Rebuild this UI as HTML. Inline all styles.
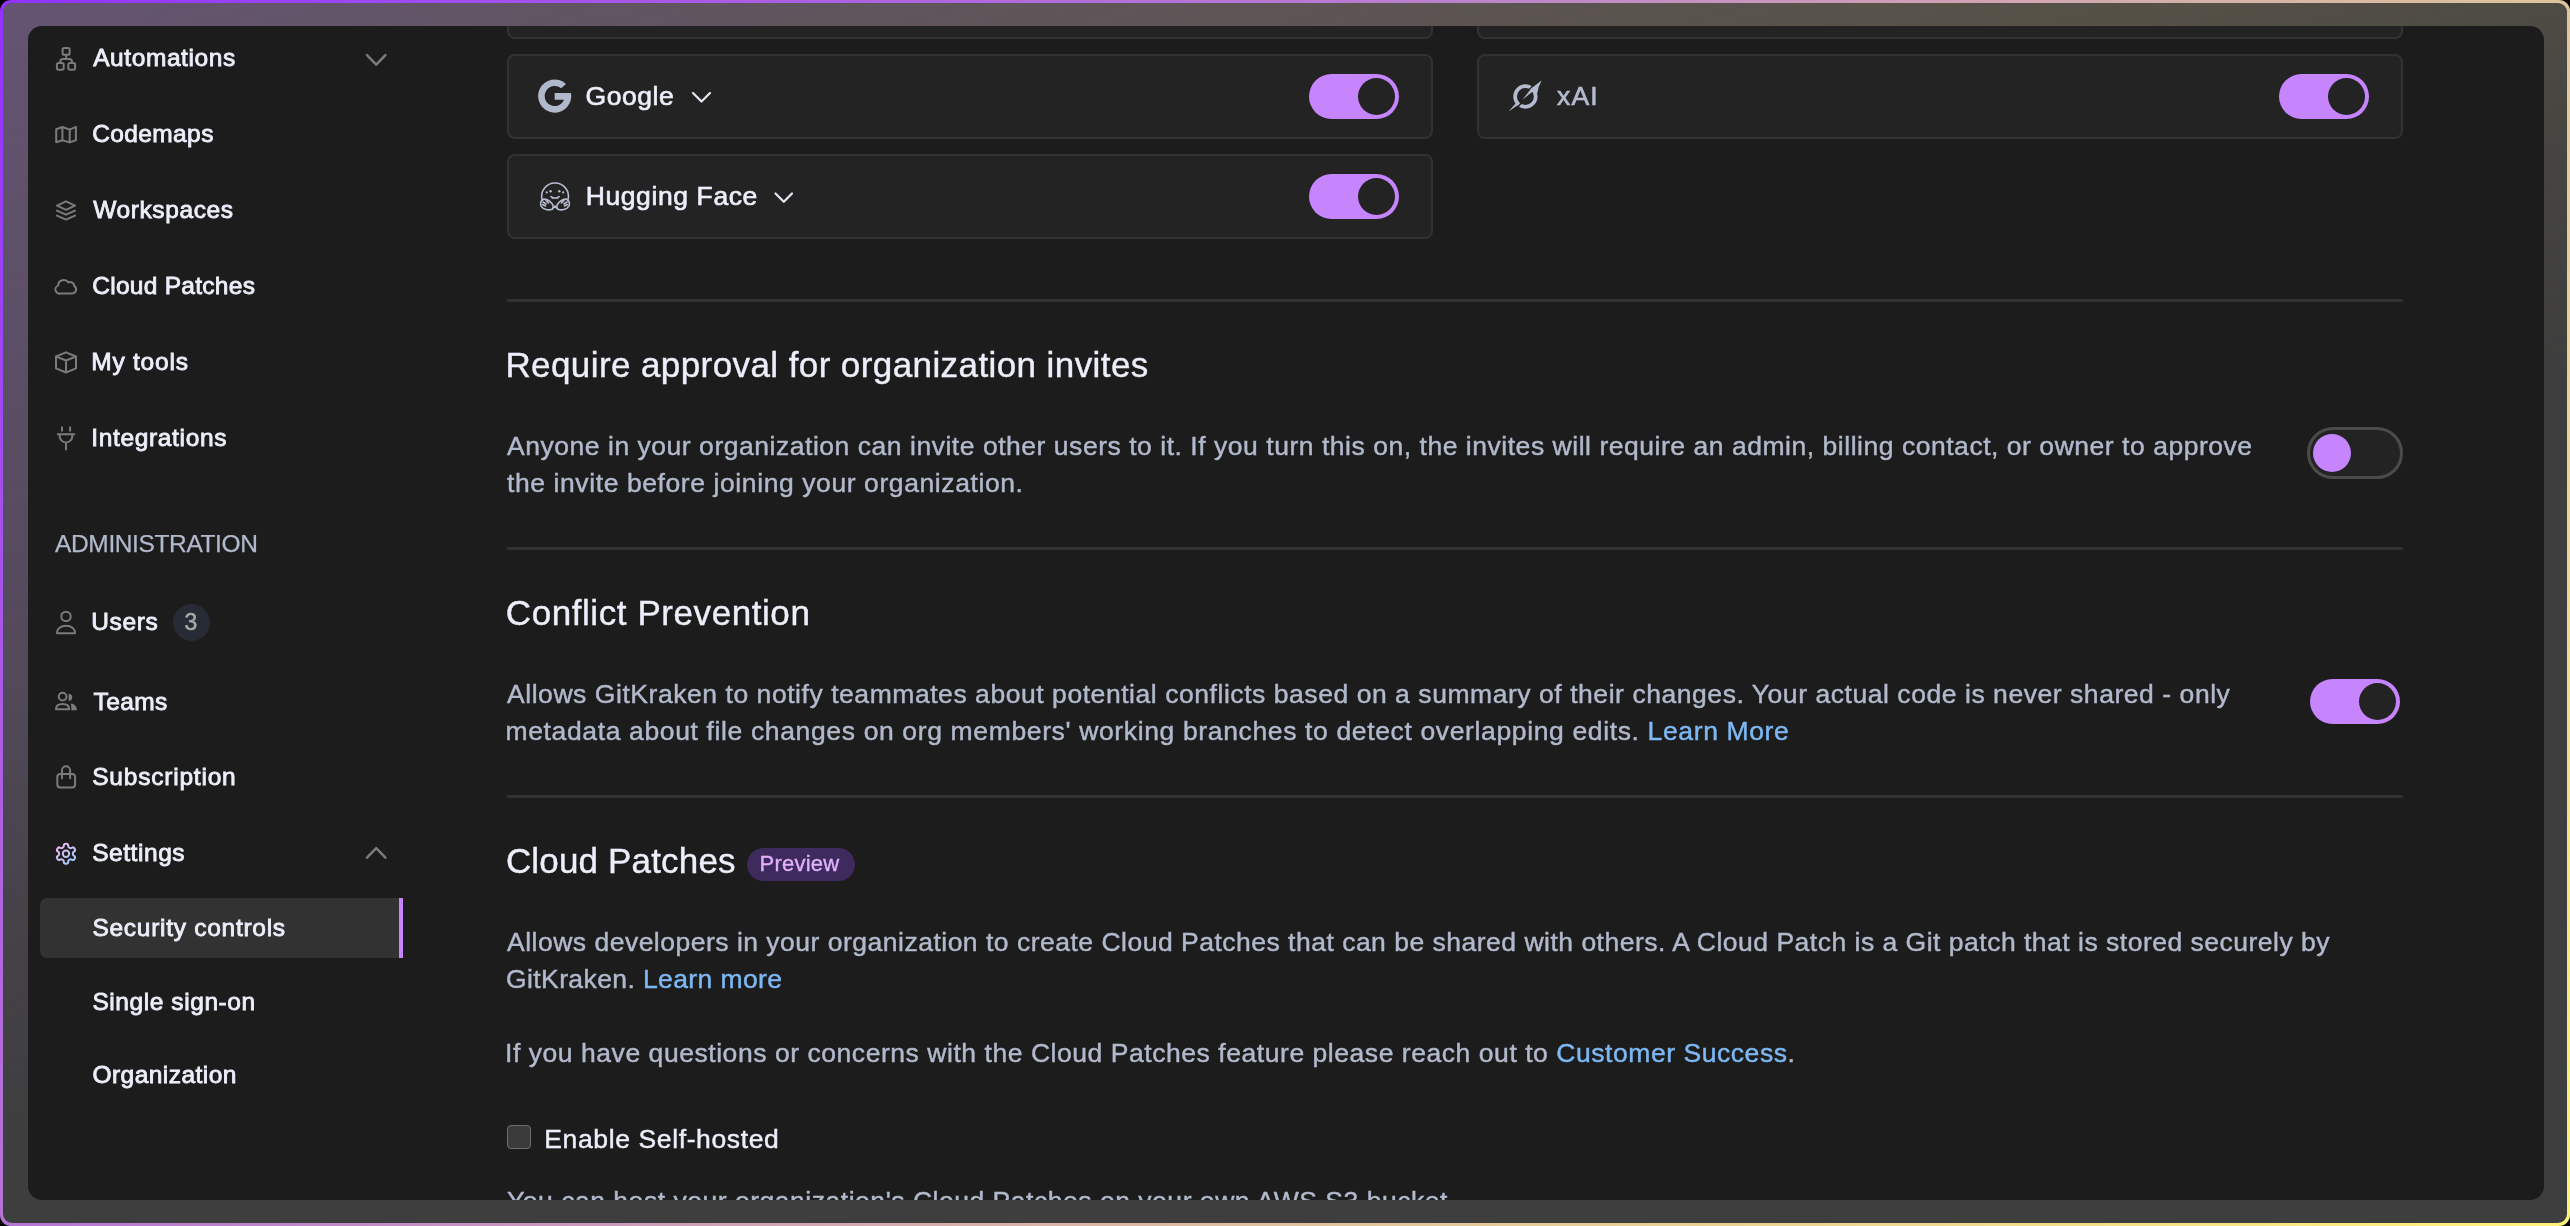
<!DOCTYPE html>
<html><head><meta charset="utf-8"><style>
*{margin:0;padding:0;box-sizing:border-box}
html,body{width:2570px;height:1226px;overflow:hidden;background:#000}
body{position:relative;font-family:"Liberation Sans",sans-serif}
.frame{position:absolute;left:0;top:0;width:2570px;height:1226px;border-radius:11px;
 background:linear-gradient(135deg,#9232ff 0%,#a85ae6 18%,#b97cd0 36%,#d0a3b4 52%,#e1c59a 68%,#efd98c 84%,#fff27a 100%)}
.inner{position:absolute;left:3px;top:3px;right:3px;bottom:3px;border-radius:9px;background:#3e3e3e;overflow:hidden}
.tint{position:absolute;left:0;top:0;right:0;bottom:0;
 background:linear-gradient(90deg,#655473 0%,#665a64 30%,#695e5e 50%,#68604f 80%,#68614d 100%);
 -webkit-mask-image:linear-gradient(163deg,rgba(0,0,0,1) 0%,rgba(0,0,0,0.55) 33%,rgba(0,0,0,0.2) 46%,rgba(0,0,0,0) 58%)}
.panel{position:absolute;left:28px;top:26px;width:2516px;height:1174px;border-radius:14px;background:#1c1c1c;overflow:hidden}
.abs{position:absolute}
.t{position:absolute;white-space:nowrap;font-family:"Liberation Sans",sans-serif}
.card{position:absolute;background:#232323;border:2px solid #323232;border-radius:8px}
.sep{position:absolute;left:507px;width:1896px;height:3px;background:#313131}
.tog{position:absolute;width:90px;height:45px;border-radius:23px;background:#c684fd}
.tog::after{content:"";position:absolute;right:4px;top:4px;width:37px;height:37px;border-radius:50%;background:#232323}
.hl{position:absolute;left:40px;top:898px;width:363px;height:60px;background:#323232;border-radius:7px 0 0 7px}
.hlbar{position:absolute;left:399px;top:898px;width:4px;height:60px;background:#c684fd}
.badge3{position:absolute;left:172.5px;top:604.3px;width:37px;height:37px;border-radius:50%;background:#272b35}
.badge3 span{position:absolute;left:0;right:0;top:7px;text-align:center;font-size:23px;line-height:23px;color:#a9a9a9;-webkit-text-stroke:0.5px #a9a9a9;font-family:"Liberation Sans",sans-serif}
.pill{position:absolute;left:746.5px;top:847.5px;width:108.5px;height:33.5px;border-radius:17px;background:#3e2a5c}
.ic{position:absolute;left:0;top:0}
.off{position:absolute;left:2307px;top:427px;width:96px;height:52px;border-radius:26px;border:3.3px solid #4b4b4b;background:#232323}
.off::after{content:"";position:absolute;left:3.3px;top:4.4px;width:38px;height:38px;border-radius:50%;background:#c684fd}
.cb{position:absolute;left:507px;top:1124.5px;width:24px;height:24px;border-radius:4px;border:1.6px solid #6e6e6e;background:#3b3b3b}
</style></head><body>
<div class="frame"><div class="inner"><div class="tint"></div></div></div>
<div class="panel"><div style="position:absolute;left:-28px;top:-26px;width:2570px;height:1226px;will-change:transform">
<div class="card" style="left:507px;top:-47px;width:925.5px;height:86px"></div>
<div class="card" style="left:1477px;top:-47px;width:926px;height:86px"></div>
<div class="card" style="left:507px;top:53.5px;width:925.5px;height:85.5px"></div>
<div class="card" style="left:1477px;top:53.5px;width:926px;height:85.5px"></div>
<div class="card" style="left:507px;top:153.5px;width:925.5px;height:85.5px"></div>
<div class="tog" style="left:1308.5px;top:73.8px"></div>
<div class="tog" style="left:2278.7px;top:74px"></div>
<div class="tog" style="left:1308.5px;top:173.8px"></div>
<div class="tog" style="left:2310px;top:679px"></div>
<div class="off"></div>
<div class="sep" style="top:298.5px"></div>
<div class="sep" style="top:546.5px"></div>
<div class="sep" style="top:794.5px"></div>
<div class="cb"></div>
<div class="hl"></div><div class="hlbar"></div>
<div class="t" style="left:93.20px;top:45.86px;font-size:24.5px;line-height:24.5px;color:#eceffa;font-weight:400;letter-spacing:0.580px;-webkit-text-stroke:0.85px #eceffa;">Automations</div>
<div class="t" style="left:92.20px;top:121.66px;font-size:24.5px;line-height:24.5px;color:#eceffa;font-weight:400;letter-spacing:0.388px;-webkit-text-stroke:0.85px #eceffa;">Codemaps</div>
<div class="t" style="left:93.20px;top:197.96px;font-size:24.5px;line-height:24.5px;color:#eceffa;font-weight:400;letter-spacing:0.611px;-webkit-text-stroke:0.85px #eceffa;">Workspaces</div>
<div class="t" style="left:92.20px;top:274.06px;font-size:24.5px;line-height:24.5px;color:#eceffa;font-weight:400;letter-spacing:0.284px;-webkit-text-stroke:0.85px #eceffa;">Cloud Patches</div>
<div class="t" style="left:91.20px;top:350.16px;font-size:24.5px;line-height:24.5px;color:#eceffa;font-weight:400;letter-spacing:0.786px;-webkit-text-stroke:0.85px #eceffa;">My tools</div>
<div class="t" style="left:91.20px;top:426.06px;font-size:24.5px;line-height:24.5px;color:#eceffa;font-weight:400;letter-spacing:0.666px;-webkit-text-stroke:0.85px #eceffa;">Integrations</div>
<div class="t" style="left:91.20px;top:610.06px;font-size:24.5px;line-height:24.5px;color:#eceffa;font-weight:400;letter-spacing:0.650px;-webkit-text-stroke:0.85px #eceffa;">Users</div>
<div class="t" style="left:93.60px;top:689.56px;font-size:24.5px;line-height:24.5px;color:#eceffa;font-weight:400;letter-spacing:0.350px;-webkit-text-stroke:0.85px #eceffa;">Teams</div>
<div class="t" style="left:92.20px;top:765.26px;font-size:24.5px;line-height:24.5px;color:#eceffa;font-weight:400;letter-spacing:0.792px;-webkit-text-stroke:0.85px #eceffa;">Subscription</div>
<div class="t" style="left:92.20px;top:840.66px;font-size:24.5px;line-height:24.5px;color:#eceffa;font-weight:400;letter-spacing:0.554px;-webkit-text-stroke:0.85px #eceffa;">Settings</div>
<div class="t" style="left:92.40px;top:915.76px;font-size:24.5px;line-height:24.5px;color:#eceffa;font-weight:400;letter-spacing:0.725px;-webkit-text-stroke:0.85px #eceffa;">Security controls</div>
<div class="t" style="left:92.40px;top:989.76px;font-size:24.5px;line-height:24.5px;color:#eceffa;font-weight:400;letter-spacing:0.576px;-webkit-text-stroke:0.85px #eceffa;">Single sign-on</div>
<div class="t" style="left:92.40px;top:1063.46px;font-size:24.5px;line-height:24.5px;color:#eceffa;font-weight:400;letter-spacing:0.466px;-webkit-text-stroke:0.85px #eceffa;">Organization</div>
<div class="t" style="left:55.10px;top:531.56px;font-size:24.5px;line-height:24.5px;color:#b1b9cc;font-weight:400;letter-spacing:-0.385px;-webkit-text-stroke:0.25px #b1b9cc;">ADMINISTRATION</div>
<div class="badge3"><span>3</span></div>
<div class="t" style="left:585.50px;top:82.57px;font-size:26.5px;line-height:26.5px;color:#eceffa;font-weight:400;letter-spacing:0.560px;-webkit-text-stroke:0.65px #eceffa;">Google</div>
<div class="t" style="left:1557.00px;top:82.87px;font-size:26.5px;line-height:26.5px;color:#b3bbce;font-weight:400;letter-spacing:1.150px;-webkit-text-stroke:0.65px #b3bbce;">xAI</div>
<div class="t" style="left:585.70px;top:182.57px;font-size:26.5px;line-height:26.5px;color:#eceffa;font-weight:400;letter-spacing:0.607px;-webkit-text-stroke:0.65px #eceffa;">Hugging Face</div>
<div class="t" style="left:505.40px;top:347.07px;font-size:35px;line-height:35px;color:#eceffa;font-weight:400;letter-spacing:0.410px;-webkit-text-stroke:0.4px #eceffa;">Require approval for organization invites</div>
<div class="t" style="left:505.80px;top:594.97px;font-size:35px;line-height:35px;color:#eceffa;font-weight:400;letter-spacing:0.573px;-webkit-text-stroke:0.4px #eceffa;">Conflict Prevention</div>
<div class="t" style="left:505.90px;top:842.97px;font-size:35px;line-height:35px;color:#eceffa;font-weight:400;letter-spacing:0.165px;-webkit-text-stroke:0.4px #eceffa;">Cloud Patches</div>
<div class="t" style="left:507.00px;top:432.57px;font-size:26.5px;line-height:26.5px;color:#b1b9cc;font-weight:400;letter-spacing:0.531px;-webkit-text-stroke:0.45px currentColor;">Anyone in your organization can invite other users to it. If you turn this on, the invites will require an admin, billing contact, or owner to approve</div>
<div class="t" style="left:507.00px;top:469.57px;font-size:26.5px;line-height:26.5px;color:#b1b9cc;font-weight:400;letter-spacing:0.590px;-webkit-text-stroke:0.45px currentColor;">the invite before joining your organization.</div>
<div class="t" style="left:507.00px;top:680.57px;font-size:26.5px;line-height:26.5px;color:#b1b9cc;font-weight:400;letter-spacing:0.551px;-webkit-text-stroke:0.45px currentColor;">Allows GitKraken to notify teammates about potential conflicts based on a summary of their changes. Your actual code is never shared - only</div>
<div class="t" style="left:505.50px;top:717.57px;font-size:26.5px;line-height:26.5px;color:#b1b9cc;font-weight:400;letter-spacing:0.636px;-webkit-text-stroke:0.45px currentColor;">metadata about file changes on org members' working branches to detect overlapping edits. <span style="color:#7db8f3">Learn More</span></div>
<div class="t" style="left:507.00px;top:928.67px;font-size:26.5px;line-height:26.5px;color:#b1b9cc;font-weight:400;letter-spacing:0.497px;-webkit-text-stroke:0.45px currentColor;">Allows developers in your organization to create Cloud Patches that can be shared with others. A Cloud Patch is a Git patch that is stored securely by</div>
<div class="t" style="left:506.00px;top:965.67px;font-size:26.5px;line-height:26.5px;color:#b1b9cc;font-weight:400;letter-spacing:0.400px;-webkit-text-stroke:0.45px currentColor;">GitKraken. <span style="color:#7db8f3">Learn more</span></div>
<div class="t" style="left:505.00px;top:1039.87px;font-size:26.5px;line-height:26.5px;color:#b1b9cc;font-weight:400;letter-spacing:0.549px;-webkit-text-stroke:0.45px currentColor;">If you have questions or concerns with the Cloud Patches feature please reach out to <span style="color:#7db8f3">Customer Success</span>.</div>
<div class="t" style="left:544.30px;top:1126.07px;font-size:26.5px;line-height:26.5px;color:#eceffa;font-weight:400;letter-spacing:0.618px;-webkit-text-stroke:0.45px #eceffa;">Enable Self-hosted</div>
<div class="t" style="left:507.00px;top:1187.57px;font-size:26.5px;line-height:26.5px;color:#b1b9cc;font-weight:400;letter-spacing:0.524px;-webkit-text-stroke:0.45px currentColor;">You can host your organization's Cloud Patches on your own AWS S3 bucket.</div>
<div class="pill"></div>
<div class="t" style="left:759.50px;top:853.28px;font-size:22px;line-height:22px;color:#e2b1fd;font-weight:400;letter-spacing:0.235px;-webkit-text-stroke:0.35px #e2b1fd;">Preview</div>

<svg class="ic" width="2570" height="1226" viewBox="0 0 2570 1226">
<defs>
<linearGradient id="gg" x1="3" y1="2" x2="21" y2="22" gradientUnits="userSpaceOnUse">
<stop offset="0" stop-color="#f6b2f7"/><stop offset="0.5" stop-color="#c8c0f6"/><stop offset="1" stop-color="#94cfff"/></linearGradient>
</defs>
<g fill="none" stroke="#7b7b7b" stroke-width="2" stroke-linecap="round" stroke-linejoin="round">
<!-- automations -->
<rect x="62.6" y="48" width="7" height="6.8" rx="1.6"/>
<rect x="56.9" y="62.9" width="6.8" height="6.8" rx="1.6"/>
<rect x="68.3" y="62.9" width="6.8" height="6.8" rx="1.6"/>
<path d="M66.1 54.8 V58.6 M60.3 62.9 V61.6 A2.6 2.6 0 0 1 62.9 59 H69.3 A2.6 2.6 0 0 1 71.9 61.6 V62.9"/>
<!-- codemaps -->
<path d="M56.2 129.3 L62.4 127 L69.7 129.6 L75.9 126.9 V140.3 L69.7 142.4 L62.4 140.2 L56.2 142.3 Z M62.4 127 V140.2 M69.7 129.6 V142.4"/>
<!-- workspaces -->
<path d="M57 205.6 L66 201.3 L75 205.6 L66 209.8 Z M57 210.6 L66 214.7 L75 210.6 M57 215.6 L66 219.7 L75 215.6"/>
<!-- cloud -->
<path d="M60.8 293.4 H72.2 A3.9 3.9 0 0 0 74.3 286.2 A4.2 4.2 0 0 0 68.4 282.4 A5.6 5.6 0 0 0 58.2 285.6 A4 4 0 0 0 60.8 293.4 Z"/>
<!-- my tools -->
<path d="M66 352.3 L76 356.5 V368.4 L66 372.5 L56 368.4 V356.5 Z M56.3 356.6 L66 360.5 L75.7 356.6 M66 360.5 V372.3"/>
<!-- integrations -->
<path d="M62 427.3 V430.8 M70.1 427.3 V430.8 M57.8 434.2 H74.3 M59.7 434.4 V436.2 A6.3 6.3 0 0 0 72.3 436.2 V434.4 M66 442.6 V449.4"/>
<!-- users -->
<circle cx="66" cy="616.4" r="4.7"/>
<path d="M57 633.2 H75 C75 628.8 71.3 625.8 66 625.8 C60.7 625.8 57 628.8 57 633.2 Z"/>
<!-- teams -->
<circle cx="62.6" cy="696.6" r="3.9"/>
<path d="M56 709.2 H69.2 C69.2 706 66.8 703.9 62.6 703.9 C58.4 703.9 56 706 56 709.2 Z"/>
<!-- subscription -->
<rect x="57.3" y="774" width="17.8" height="13.6" rx="3"/>
<path d="M62 778.2 V770.4 A4.05 4.05 0 0 1 70.1 770.4 V778.2"/>
<!-- chevrons sidebar -->
<path stroke-width="2.5" d="M367 55.2 L376.2 64.6 L385.4 55.2"/>
<path stroke-width="2.5" d="M367 857.6 L376.2 848.2 L385.4 857.6"/>
</g>
<g fill="#7b7b7b">
<path d="M68.6 693.7 A3.6 3.6 0 0 1 68.6 700.9 Z"/>
<path d="M70.6 703.6 C74.5 703.8 76.9 706.4 76.9 710.3 H71.4 C71.4 707.6 71.2 705.3 70.6 703.6 Z"/>
</g>
<!-- settings gear -->
<g fill="none" stroke="url(#gg)" stroke-width="2" stroke-linecap="round" stroke-linejoin="round" transform="translate(54 841.7)">
<path d="M12.22 2h-.44a2 2 0 0 0-2 2v.18a2 2 0 0 1-1 1.730l-.43.25a2 2 0 0 1-2 0l-.15-.08a2 2 0 0 0-2.73.73l-.22.38a2 2 0 0 0 .73 2.73l.15.1a2 2 0 0 1 1 1.72v.51a2 2 0 0 1-1 1.74l-.15.09a2 2 0 0 0-.73 2.73l.22.38a2 2 0 0 0 2.73.73l.15-.08a2 2 0 0 1 2 0l.43.25a2 2 0 0 1 1 1.73V20a2 2 0 0 0 2 2h.44a2 2 0 0 0 2-2v-.18a2 2 0 0 1 1-1.73l.43-.25a2 2 0 0 1 2 0l.15.08a2 2 0 0 0 2.73-.73l.22-.39a2 2 0 0 0-.73-2.73l-.15-.08a2 2 0 0 1-1-1.74v-.5a2 2 0 0 1 1-1.74l.15-.09a2 2 0 0 0 .73-2.73l-.22-.38a2 2 0 0 0-2.73-.73l-.15.08a2 2 0 0 1-2 0l-.43-.25a2 2 0 0 1-1-1.73V4a2 2 0 0 0-2-2z"/>
<circle cx="12" cy="12" r="3.2"/>
</g>
<!-- card chevrons -->
<g fill="none" stroke="#e6e9f5" stroke-width="2.2" stroke-linecap="round" stroke-linejoin="round">
<path d="M693 93 L701.5 101.5 L710 93"/>
<path d="M775.5 193.5 L783.8 201.8 L792 193.5"/>
</g>
<!-- google G -->
<path fill="#b0b8cc" d="M566.0 83.9 A16.6 16.6 0 1 0 571.0 93 L554.7 93 L554.7 99.8 L563.95 99.8 A10 10 0 1 1 561.1 88.3 Z"/>
<!-- hugging face -->
<g fill="none" stroke="#b6bdd0" stroke-width="1.6" stroke-linecap="round" stroke-linejoin="round">
<path d="M542.3 200.5 A13.4 13.4 0 1 1 567.8 200.5"/>
<path d="M551 196.6 Q555 199.6 559.2 196.6"/>
<path d="M540.8 205.5 C540.2 202 541.5 199.3 544 199.1 C546.5 199 549.5 201 551.5 203 C553.5 205 553.8 208.2 552 209.2 C549 210.6 543 210 540.8 205.5 Z"/>
<path d="M569.2 205.5 C569.8 202 568.5 199.3 566 199.1 C563.5 199 560.5 201 558.5 203 C556.5 205 556.2 208.2 558 209.2 C561 210.6 567 210 569.2 205.5 Z"/>
<path d="M552.5 208.8 L555 206 L557.5 208.8"/>
<path d="M543 202 L546 204 M542.5 204.5 L545.5 206 M546 200.5 L548.5 203"/>
<path d="M567 202 L564 204 M567.5 204.5 L564.5 206 M564 200.5 L561.5 203"/>
</g>
<g fill="#b6bdd0">
<circle cx="546.8" cy="192.4" r="1.1"/><circle cx="550.6" cy="191.2" r="1.2"/>
<circle cx="559.3" cy="191.2" r="1.2"/><circle cx="563.2" cy="192.4" r="1.1"/>
<path d="M551.3 197.4 L552.2 199.6 L553 197.9 Z M558.7 197.4 L557.8 199.6 L557 197.9 Z"/>
</g>
<!-- xAI -->
<circle cx="1525.4" cy="96.5" r="10.3" fill="none" stroke="#b3bbce" stroke-width="3.7"/>
<g stroke="#232323" stroke-width="1.7" stroke-linecap="butt">
<path d="M1528.3 90.7 L1535.6 83.7"/>
<path d="M1522.5 102.2 L1515.4 109.0"/>
</g>
<g fill="#b3bbce">
<path d="M1541.6 80.5 Q1538.2 86.5 1537.3 93.2 L1533.2 92.6 L1532.0 89.2 Z"/>
<path d="M1541.6 80.5 L1533.9 90.6 L1522.3 99.8 L1531.4 88.2 Z"/>
<path d="M1508.6 111.6 L1517.3 101.6 L1519.0 104.2 Z"/>
</g>
</svg>

</div></div>
</body></html>
